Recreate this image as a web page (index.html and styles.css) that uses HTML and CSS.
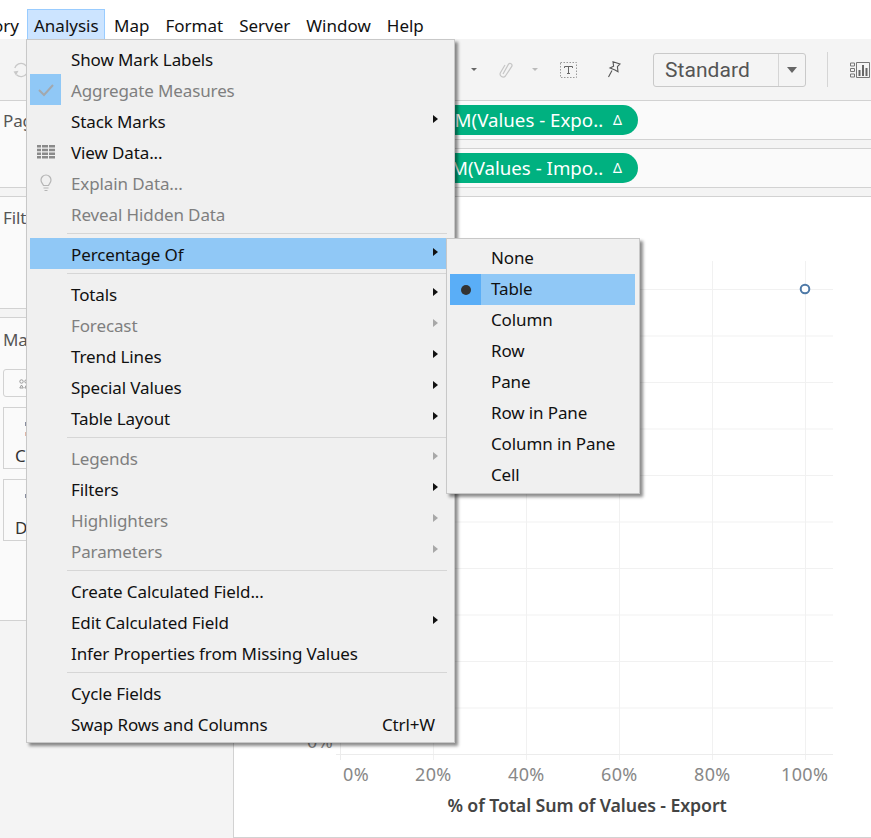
FILE: index.html

```html
<!DOCTYPE html>
<html lang="en">
<head>
  <meta charset="UTF-8" />
  <title>Analysis menu</title>
  <link rel="stylesheet" href="styles.css">
</head>
<body>
  <div class="menubar">
    <span class="menubar-item cut">ory</span>
    <span class="menubar-item active">Analysis</span>
    <span class="menubar-item">Map</span>
    <span class="menubar-item">Format</span>
    <span class="menubar-item">Server</span>
    <span class="menubar-item">Window</span>
    <span class="menubar-item">Help</span>
  </div>

  <div class="toolbar">
    <svg class="tool-refresh" width="16" height="18" viewBox="0 0 16 18" fill="none" stroke="#c8c8c8" stroke-width="1.3">
      <path d="M1.800 7A6.600 6.600 0 1 1 3.500 13.800" />
      <path d="M0.500 10.500 5.500 9.800 3 14.500z" fill="#c8c8c8" stroke="none" />
    </svg>
    <span class="caret tool-caret1"></span>
    <svg class="tool-clip" width="14" height="18" viewBox="0 0 14 18" fill="none" stroke="#c6c6c6" stroke-width="1.2">
      <path d="M4 13 9.500 3.200a2 2 0 0 1 3.400 2L6.400 15a3 3 0 0 1-5-3.200L6 4" />
    </svg>
    <span class="caret light tool-caret2"></span>
    <svg class="tool-text" width="17" height="16" viewBox="0 0 17 16" fill="none">
      <rect x="0.500" y="0.500" width="16" height="15" stroke="#999" stroke-dasharray="1.500 1.500" />
      <path d="M4.500 4.500h8M8.500 4.500v7M7 11.500h3M4.500 4.500v1.500M12.500 4.500v1.500" stroke="#666" />
    </svg>
    <svg class="tool-pin" width="14" height="17" viewBox="0 0 14 17" fill="none" stroke="#555" stroke-width="1.100">
      <path d="M6 .8l7 2.200-2.600 2.600.6 5.200-3-1.700-5-2.200 3.600-1.700zM5 9.600 1.500 16" />
    </svg>
    <div class="combo">
      <span class="combo-text">Standard</span>
      <span class="combo-btn"><span class="caret big"></span></span>
    </div>
    <span class="tool-sep"></span>
    <svg class="tool-chart" width="20" height="16" viewBox="0 0 20 16" fill="none" stroke="#777">
      <path d="M.5 1h4v3h-4zM.5 6.500h4v3h-4zM.5 12h4v3h-4zM6.500.5h13v15h-13z" />
      <path d="M9.500 14V8M13 14V3M16.500 14V6" stroke-width="2" stroke="#666" />
    </svg>
  </div>

  <div class="workspace">
    <div class="side">
      <div class="panel panel-pages"><span class="panel-title">Pages</span></div>
      <div class="panel panel-filters"><span class="panel-title">Filters</span></div>
      <div class="panel panel-marks">
        <span class="panel-title">Marks</span>
        <div class="marks-select">
          <svg width="10" height="10" viewBox="0 0 10 10" fill="none" stroke="#999"><circle cx="2.500" cy="2.500" r="1.700" /><circle cx="7.500" cy="2.500" r="1.700" /><path d="M2.500 6 .8 9h3.500zM7.500 6 5.800 9h3.500z" /></svg>
        </div>
        <div class="marks-row">
          <div class="marks-card">
            <span class="chip chip-color"></span>
            Color
          </div>
          <div class="marks-card">Size</div>
        </div>
        <div class="marks-row">
          <div class="marks-card">
            <span class="chip chip-detail"></span>
            Detail
          </div>
          <div class="marks-card">Tooltip</div>
        </div>
      </div>
    </div>
    <div class="main">
      <div class="shelf">
        <span class="pill">SUM(Values - Expo.. <i class="delta">&#916;</i></span>
      </div>
      <div class="shelf">
        <span class="pill">SUM(Values - Impo.. <i class="delta">&#916;</i></span>
      </div>
      <div class="view">
        <svg class="chart" width="638" height="640" viewBox="234 197 638 640">
          <g stroke="#f1f1f1" fill="none">
            <path d="M341 289.500H833M341 336H833M341 382.500H833M341 429H833M341 475.500H833M341 522H833M341 568.500H833M341 615H833M341 661.500H833M341 708H833" />
            <path d="M433.500 261V760M526.500 261V760M619.500 261V760M712.500 261V760M805.500 261V760" />
            <path d="M340.500 261V760M336 754.500H833" stroke="#ececec" />
          </g>
          <circle cx="805" cy="289" r="4.300" fill="#fff" stroke="#4e79a7" stroke-width="2" />
          <g class="tick">
            <text x="343" y="781">0%</text>
            <text x="415" y="781">20%</text>
            <text x="508" y="781">40%</text>
            <text x="601" y="781">60%</text>
            <text x="694" y="781">80%</text>
            <text x="781" y="781">100%</text>
            <text x="307" y="748">0%</text>
          </g>
          <text class="axis-title" x="587" y="812">% of Total Sum of Values - Export</text>
        </svg>
      </div>
    </div>
  </div>

  <!-- dropdown menus sit over the app -->
  <div class="menu analysis-menu">
    <div class="row">Show Mark Labels</div>
    <div class="row off">
      <span class="mark checked">
        <svg width="16" height="14" viewBox="0 0 16 14" fill="none" stroke="#a3a8ad" stroke-width="2"><path d="M1 7l5 5 9-10" /></svg>
      </span>
      Aggregate Measures
    </div>
    <div class="row sub">Stack Marks</div>
    <div class="row">
      <span class="mark">
        <svg width="18" height="14" viewBox="0 0 18 14" fill="#8a8a8a"><path d="M0 0h4v2.500H0zM5 0h6v2.500H5zM12 0h6v2.500h-6zM0 3.700h4v2.500H0zM5 3.700h6v2.500H5zM12 3.700h6v2.500h-6zM0 7.400h4v2.500H0zM5 7.400h6v2.500H5zM12 7.400h6v2.500h-6zM0 11.100h4v2.500H0zM5 11.100h6v2.500H5zM12 11.100h6v2.500h-6z" /></svg>
      </span>
      View Data...
    </div>
    <div class="row off">
      <span class="mark">
        <svg width="14" height="18" viewBox="0 0 14 18" fill="none" stroke="#b5b5b5" stroke-width="1.200"><path d="M4.500 11.500C4 9.500 2 9 2 6a5 5 0 0 1 10 0c0 3-2 3.500-2.500 5.500zM4.500 14h5M5.500 16.500h3" /></svg>
      </span>
      Explain Data...
    </div>
    <div class="row off">Reveal Hidden Data</div>
    <div class="sep"></div>
    <div class="row sub hot">Percentage Of</div>
    <div class="sep"></div>
    <div class="row sub">Totals</div>
    <div class="row sub off">Forecast</div>
    <div class="row sub">Trend Lines</div>
    <div class="row sub">Special Values</div>
    <div class="row sub">Table Layout</div>
    <div class="sep"></div>
    <div class="row sub off">Legends</div>
    <div class="row sub">Filters</div>
    <div class="row sub off">Highlighters</div>
    <div class="row sub off">Parameters</div>
    <div class="sep"></div>
    <div class="row">Create Calculated Field...</div>
    <div class="row sub">Edit Calculated Field</div>
    <div class="row">Infer Properties from Missing Values</div>
    <div class="sep"></div>
    <div class="row">Cycle Fields</div>
    <div class="row">Swap Rows and Columns<span class="shortcut">Ctrl+W</span></div>
  </div>

  <div class="menu percent-menu">
    <div class="row">None</div>
    <div class="row hot"><span class="mark checked dark"><span class="dot"></span></span>Table</div>
    <div class="row">Column</div>
    <div class="row">Row</div>
    <div class="row">Pane</div>
    <div class="row">Row in Pane</div>
    <div class="row">Column in Pane</div>
    <div class="row">Cell</div>
  </div>
</body>
</html>
```

FILE: styles.css

```css
:root {
  --line: #d2d2d2;
  --hot: #90c8f6;
  --hot-dark: #5aaef7;
  --menu-bg: #f0f0f0;
  --off: #7f7f7f;
}

html, body {
  height: 100%;
}

body {
  margin: 0;
  width: 871px;
  height: 838px;
  overflow: hidden;
  position: relative;
  background: white;
  color: #111;
  font-family: "Noto Sans", "Open Sans", sans-serif;
  font-size: 17px;
  letter-spacing: -0.12px;
  display: flex;
  flex-direction: column;
}

/* top bars */
.menubar {
  height: 39px;
  display: flex;
  align-items: flex-end;
  background: white;
  letter-spacing: 0;
}

.menubar-item {
  height: 30px;
  line-height: 33px;
  padding: 0 7px;
  margin-right: 2px;
  box-sizing: border-box;
}

.menubar-item.cut {
  padding: 0;
  width: 27px;
  margin: 0;
  text-indent: -7px;
  overflow: hidden;
}

.menubar-item.active {
  background: #cce4ff;
  border: 1px solid #99ccff;
  border-bottom: none;
  padding: 0 6px;
  line-height: 31px;
  width: 78px;
}

.toolbar {
  height: 62px;
  box-sizing: border-box;
  background: #f4f4f4;
  border-bottom: 1px solid var(--line);
  position: relative;
  display: flex;
  align-items: center;
}

.tool-refresh { margin-left: 13px; }
.tool-caret1 { margin-left: 442px; }
.tool-clip { margin-left: 22px; }
.tool-caret2 { margin-left: 19px; }
.tool-text { margin-left: 22px; }
.tool-pin { margin-left: 30px; }

.caret {
  width: 0;
  height: 0;
  border-left: 3px solid transparent;
  border-right: 3px solid transparent;
  border-top: 3px solid #666;
}

.caret.light { border-top-color: #bbb; }

.caret.big {
  border-left-width: 5px;
  border-right-width: 5px;
  border-top: 6px solid #666;
}

.combo {
  margin-left: 32px;
  width: 153px;
  height: 34px;
  box-sizing: border-box;
  border: 1px solid #c9c9c9;
  border-radius: 3px;
  display: flex;
}

.combo-text {
  flex: 1;
  padding-left: 11px;
  font-family: Roboto, sans-serif;
  font-size: 21px;
  line-height: 33px;
  letter-spacing: 0.05px;
  color: #555;
}

.combo-btn {
  width: 26px;
  border-left: 1px solid #d5d5d5;
  display: flex;
  align-items: center;
  justify-content: center;
}

.tool-sep {
  width: 1px;
  height: 35px;
  background: #d5d5d5;
  margin-left: 21px;
}

.tool-chart { margin-left: 22px; }

/* shelves and side panels */
.workspace {
  flex: 1;
  display: flex;
  min-height: 0;
  background: #f4f4f4;
}

.side {
  width: 233px;
  flex: none;
  display: flex;
  flex-direction: column;
  gap: 8px;
}

.panel {
  background: #fafafa;
  border-bottom: 1px solid var(--line);
  padding: 6px 0 0 3px;
  box-sizing: border-box;
}

.panel + .panel { border-top: 1px solid var(--line); }

.panel-pages { height: 87px; }
.panel-filters { height: 113px; }
.panel-marks { height: 304px; }

.panel-title {
  color: #555;
  display: block;
  line-height: 28px;
}

.panel-filters .panel-title { margin-top: 1px; }
.panel-marks .panel-title { margin-top: 2px; }

.marks-select {
  height: 28px;
  margin: 15px 6px 10px 0;
  padding: 9px 0 0 15px;
  border: 1px solid var(--line);
  border-radius: 3px;
  box-sizing: border-box;
}

.marks-select svg { display: block; }

.marks-row {
  display: flex;
  gap: 4px;
  margin-bottom: 10px;
}

.marks-card {
  width: 70px;
  height: 62px;
  box-sizing: border-box;
  border: 1px solid var(--line);
  padding: 36px 0 0 11px;
  color: #333;
  position: relative;
}

.chip {
  position: absolute;
  left: 21px;
  top: 14px;
  width: 8px;
  height: 4px;
  background: #8a8fa0;
}

.chip-color {
  box-shadow: 0 10px 0 #e0b8a8;
}

.main {
  flex: 1;
  display: flex;
  flex-direction: column;
  border-left: 1px solid var(--line);
  min-width: 0;
}

.shelf {
  height: 39px;
  box-sizing: border-box;
  background: #fafafa;
  border-bottom: 1px solid var(--line);
  margin-bottom: 8px;
  padding: 4px 0 0 115px;
}

.shelf + .shelf {
  height: 40px;
  border-top: 1px solid var(--line);
}

.pill {
  display: block;
  width: 289px;
  height: 30px;
  box-sizing: border-box;
  border-radius: 15px;
  background: #00b180;
  color: white;
  font-size: 18.7px;
  letter-spacing: 0;
  line-height: 30px;
  text-align: right;
  padding-right: 16px;
  white-space: nowrap;
}

.delta {
  font-style: normal;
  font-size: 14px;
  margin-left: 5px;
  vertical-align: 2px;
}

.view {
  flex: 1;
  background: white;
  border-top: 1px solid var(--line);
  border-bottom: 1px solid var(--line);
  margin-left: -1px;
  border-left: 1px solid var(--line);
  min-height: 0;
}

.chart {
  display: block;
}

.tick text {
  fill: #888;
  font-size: 18px;
  letter-spacing: 0.35px;
}

.axis-title {
  fill: #444;
  font-size: 17.8px;
  font-weight: 600;
  text-anchor: middle;
}

/* dropdowns */
.menu {
  position: absolute;
  box-sizing: border-box;
  background: var(--menu-bg);
  border: 1px solid #c8c8c8;
  box-shadow: 3px 3px 3px rgba(0, 0, 0, 0.45);
  padding: 3px 2px 3px 3px;
}

.analysis-menu {
  left: 26px;
  top: 39px;
  width: 429px;
  height: 704px;
}

.percent-menu {
  left: 446px;
  top: 238px;
  width: 194px;
  height: 256px;
  padding: 4px 4px 4px 3px;
}

.row {
  height: 31px;
  line-height: 34px;
  padding-left: 41px;
  position: relative;
  white-space: nowrap;
}

.percent-menu .row { line-height: 30px; }

.row.off { color: var(--off); }
.row.hot { background: var(--hot); }

.sub::after {
  content: "";
  position: absolute;
  right: 14px;
  top: 10px;
  border-left: 5px solid #111;
  border-top: 4px solid transparent;
  border-bottom: 4px solid transparent;
}

.sub.off::after { border-left-color: #a8a8a8; }

.mark {
  position: absolute;
  left: 0;
  top: 0;
  width: 31px;
  height: 31px;
  display: flex;
  align-items: center;
  justify-content: center;
}

.mark.checked { background: var(--hot); }
.mark.dark { background: var(--hot-dark); }

.dot {
  width: 10px;
  height: 10px;
  border-radius: 50%;
  background: #333;
}

.shortcut {
  position: absolute;
  right: 17px;
}

.sep {
  height: 1px;
  background: #d6d6d6;
  margin: 4px 5px 4px 37px;
}
```
